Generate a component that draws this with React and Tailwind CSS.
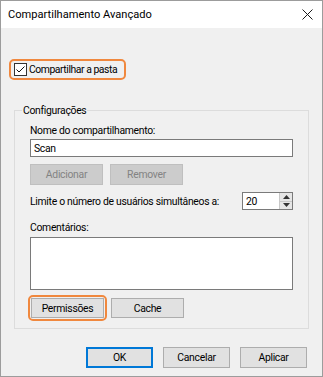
export default function App() {
  const title = { fontFamily: 'Roboto, "Noto Sans", sans-serif' };
  const body = { fontFamily: 'Roboto, "Liberation Sans", sans-serif' };

  return (
    <div
      className="w-[323px] h-[377px] border border-[#9c9c9c] bg-[#f0f0f0] flex flex-col text-[10.4px] tracking-[-0.3px] leading-[15px] text-black"
      style={body}
    >
      {/* barra de título */}
      <div className="h-[27px] bg-white flex items-center justify-between pl-[7px] pr-[9px] shrink-0 tracking-normal" style={title}>
        <span className="text-[11.1px]">Compartilhamento Avançado</span>
        <svg width="11" height="11" viewBox="0 0 11 11">
          <path d="M0.5 0.5 L10.5 10.5 M10.5 0.5 L0.5 10.5" stroke="#1a1a1a" strokeWidth="1" />
        </svg>
      </div>

      {/* compartilhar a pasta */}
      <div className="mt-[31px] ml-[8px] self-start h-[21px] border-2 border-[#f0883e] rounded-[5px] flex items-center pl-[3px] pr-[7px] gap-[2px] whitespace-nowrap">
        <svg width="13" height="13" viewBox="0 0 13 13" className="shrink-0">
          <rect x="0.5" y="0.5" width="12" height="12" fill="#fff" stroke="#333" />
          <path d="M2.5 6.5 L5 9 L10.5 3.5" fill="none" stroke="#111" strokeWidth="1" />
        </svg>
        <span className="tracking-[-0.45px]">Compartilhar a pasta</span>
      </div>

      {/* configurações */}
      <div className="relative mt-[30px] ml-[13px] w-[295px] h-[219px] border border-[#dcdcdc] shrink-0">
        <span className="absolute left-[7px] top-[-8px] bg-[#f0f0f0] px-[1px]">Configurações</span>
        <div className="pl-[15px] pt-[12px] flex flex-col">
          <span>Nome do compartilhamento:</span>
          <div className="mt-[1px] w-[263px] h-[18px] border border-[#7a7a7a] bg-white flex items-center px-[3px]">
            Scan
          </div>
          <div className="mt-[7px] flex gap-[7px]">
            <div className="w-[73px] h-[21px] border border-[#bfbfbf] bg-[#cccccc] text-[#838383] flex items-center justify-center">
              Adicionar
            </div>
            <div className="w-[73px] h-[21px] border border-[#bfbfbf] bg-[#cccccc] text-[#838383] flex items-center justify-center">
              Remover
            </div>
          </div>
          <div className="mt-[7px] w-[263px] flex items-center justify-between">
            <span className="whitespace-nowrap">Limite o número de usuários simultâneos a:</span>
            <div className="w-[51px] h-[18px] border border-[#7a7a7a] bg-white flex">
              <span className="flex-1 pl-[3px] flex items-center">20</span>
              <div className="w-[13px] border-l border-[#c8c8c8] flex flex-col">
                <div className="flex-1 bg-[#e6e6e6] border-b border-[#c8c8c8] flex items-center justify-center">
                  <svg width="7" height="4" viewBox="0 0 7 4"><path d="M3.5 0 L7 4 L0 4 Z" fill="#333" /></svg>
                </div>
                <div className="flex-1 bg-[#e6e6e6] flex items-center justify-center">
                  <svg width="7" height="4" viewBox="0 0 7 4"><path d="M0 0 L7 0 L3.5 4 Z" fill="#333" /></svg>
                </div>
              </div>
            </div>
          </div>
          <span className="mt-[10px]">Comentários:</span>
          <div className="mt-[2px] w-[263px] h-[53px] border border-[#7a7a7a] bg-white" />
          <div className="mt-[5px] ml-[-2px] flex items-center">
            <div className="border-2 border-[#f0883e] rounded-[5px] p-[1px]">
              <div className="w-[73px] h-[20px] border border-[#adadad] bg-[#e1e1e1] flex items-center justify-center">
                Permissões
              </div>
            </div>
            <div className="ml-[4px] w-[73px] h-[20px] border border-[#adadad] bg-[#e1e1e1] flex items-center justify-center">
              Cache
            </div>
          </div>
        </div>
      </div>

      {/* botões inferiores */}
      <div className="mt-[18px] flex justify-end gap-[10px] pr-[15px]">
        <div className="w-[67px] h-[21px] border-2 border-[#0078d7] bg-[#e1e1e1] flex items-center justify-center">OK</div>
        <div className="w-[67px] h-[21px] border border-[#adadad] bg-[#e1e1e1] flex items-center justify-center">Cancelar</div>
        <div className="w-[67px] h-[21px] border border-[#adadad] bg-[#e1e1e1] flex items-center justify-center">Aplicar</div>
      </div>
    </div>
  );
}
